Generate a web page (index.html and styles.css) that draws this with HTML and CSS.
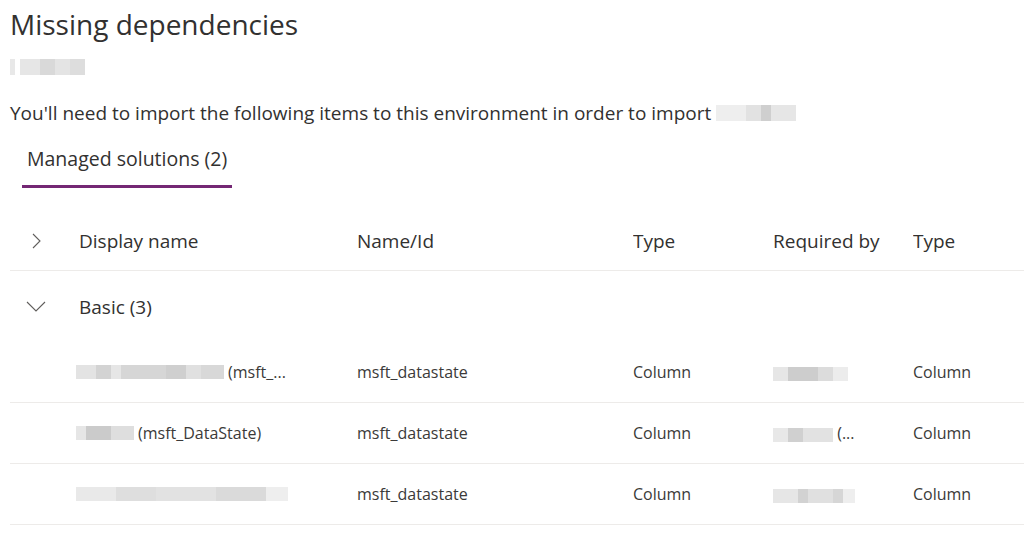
FILE: index.html
```html
<!DOCTYPE html>
<html lang="en">
<head>
<meta charset="utf-8">
<title>Missing dependencies</title>
<link rel="stylesheet" href="styles.css">
</head>
<body>
<main class="page">
  <h1 class="title">Missing dependencies</h1>
  <div class="subtitle"><span class="blur blur-sub"></span></div>
  <p class="intro">You'll need to import the following items to this environment in order to import <span class="blur blur-intro"></span></p>

  <div class="tabs">
    <div class="tab active">Managed solutions (2)</div>
  </div>

  <div class="table">
    <div class="row head">
      <div class="cell chev">
        <svg width="12" height="16" viewBox="0 0 12 16"><path d="M2 1 L9 8 L2 15" fill="none" stroke="#605e5c" stroke-width="1.1"/></svg>
      </div>
      <div class="cell">Display name</div>
      <div class="cell">Name/Id</div>
      <div class="cell">Type</div>
      <div class="cell">Required by</div>
      <div class="cell">Type</div>
    </div>

    <div class="row group">
      <div class="cell chev">
        <svg width="20" height="12" viewBox="0 0 20 12"><path d="M1 1 L10 10 L19 1" fill="none" stroke="#605e5c" stroke-width="1.1"/></svg>
      </div>
      <div class="cell group-name">Basic (3)</div>
    </div>

    <div class="row data">
      <div class="cell"></div>
      <div class="cell name"><span class="blur blur-a"></span> (msft_...</div>
      <div class="cell">msft_datastate</div>
      <div class="cell">Column</div>
      <div class="cell"><span class="blur blur-r1"></span></div>
      <div class="cell">Column</div>
    </div>
    <div class="row data">
      <div class="cell"></div>
      <div class="cell name"><span class="blur blur-b"></span> (msft_DataState)</div>
      <div class="cell">msft_datastate</div>
      <div class="cell">Column</div>
      <div class="cell"><span class="blur blur-r2"></span> (...</div>
      <div class="cell">Column</div>
    </div>
    <div class="row data">
      <div class="cell"></div>
      <div class="cell name"><span class="blur blur-c"></span></div>
      <div class="cell">msft_datastate</div>
      <div class="cell">Column</div>
      <div class="cell"><span class="blur blur-r3"></span></div>
      <div class="cell">Column</div>
    </div>
  </div>
</main>
</body>
</html>
```

FILE: styles.css
```css
* { box-sizing: border-box; }
html, body { margin: 0; padding: 0; background: #ffffff; }
body {
  font-family: "Open Sans", "Noto Sans", "Liberation Sans", sans-serif;
  color: #323130;
}
.page { padding: 6px 0 0 10px; }

.title {
  margin: 0;
  font-size: 28px;
  font-weight: 400;
  line-height: 36px;
  color: #323130;
}
.subtitle { height: 22px; margin-top: 14px; display: flex; align-items: center; }

.intro {
  margin: 23px 0 0 0;
  font-size: 19px;
  line-height: 24px;
  color: #323130;
  display: flex;
  align-items: center;
  gap: 5px;
}

.blur { display: inline-block; height: 14px; vertical-align: middle; }
.blur-sub {
  width: 75px; height: 16px;
  background: linear-gradient(90deg, #e8e8e8 0 5px, #fff 5px 10px, #e6e6e6 10px 30px, #d9d9d9 30px 45px, #e4e4e4 45px 60px, #dddddd 60px 75px);
}
.blur-intro {
  width: 80px; height: 16px;
  background: linear-gradient(90deg, #eeeeee 0 30px, #e2e2e2 30px 45px, #cfcfcf 45px 55px, #e6e6e6 55px 80px);
}

.tabs { margin-top: 22px; display: flex; padding-left: 12px; }
.tab {
  font-size: 19.5px;
  line-height: 24px;
  padding: 0 5px 14px 5px;
  border-bottom: 3px solid #742774;
  color: #323130;
}

.table { margin-top: 23px; }
.row {
  display: grid;
  grid-template-columns: 69px 278px 276px 140px 140px 1fr;
  align-items: center;
  border-bottom: 1px solid #edebe9;
}
.head { height: 60px; font-size: 19px; color: #323130; }
.group { height: 71px; border-bottom: none; font-size: 19px; }
.group .cell.group-name { grid-column: 2 / 7; }
.data { height: 61px; font-size: 16px; color: #3b3a39; }
.data .cell.name { margin-left: -3px; display: flex; align-items: center; gap: 4px; }
.cell { white-space: nowrap; overflow: hidden; }
.chev { display: flex; justify-content: center; padding-left: 4px; padding-right: 20px; }
.group .chev { padding-left: 2px; }
.chev svg { display: block; }

.blur-a {
  width: 148px;
  background: linear-gradient(90deg, #e3e3e3 0 20px, #d3d3d3 20px 35px, #e6e6e6 35px 45px, #d6d6d6 45px 90px, #cfcfcf 90px 110px, #e0e0e0 110px 125px, #d8d8d8 125px 148px);
}
.blur-b {
  width: 58px;
  background: linear-gradient(90deg, #e6e6e6 0 10px, #cbcbcb 10px 35px, #dedede 35px 58px);
}
.blur-c {
  width: 212px;
  background: linear-gradient(90deg, #e9e9e9 0 40px, #dedede 40px 80px, #e2e2e2 80px 140px, #dadada 140px 190px, #eeeeee 190px 212px);
}
.blur-r1 {
  width: 75px;
  background: linear-gradient(90deg, #e6e6e6 0 15px, #cdcdcd 15px 45px, #dcdcdc 45px 60px, #ececec 60px 75px);
}
.blur-r2 {
  width: 60px;
  background: linear-gradient(90deg, #e8e8e8 0 15px, #d0d0d0 15px 30px, #e2e2e2 30px 60px);
}
.blur-r3 {
  width: 82px;
  background: linear-gradient(90deg, #e6e6e6 0 25px, #d2d2d2 25px 35px, #e0e0e0 35px 60px, #d6d6d6 60px 70px, #eeeeee 70px 82px);
}
```
